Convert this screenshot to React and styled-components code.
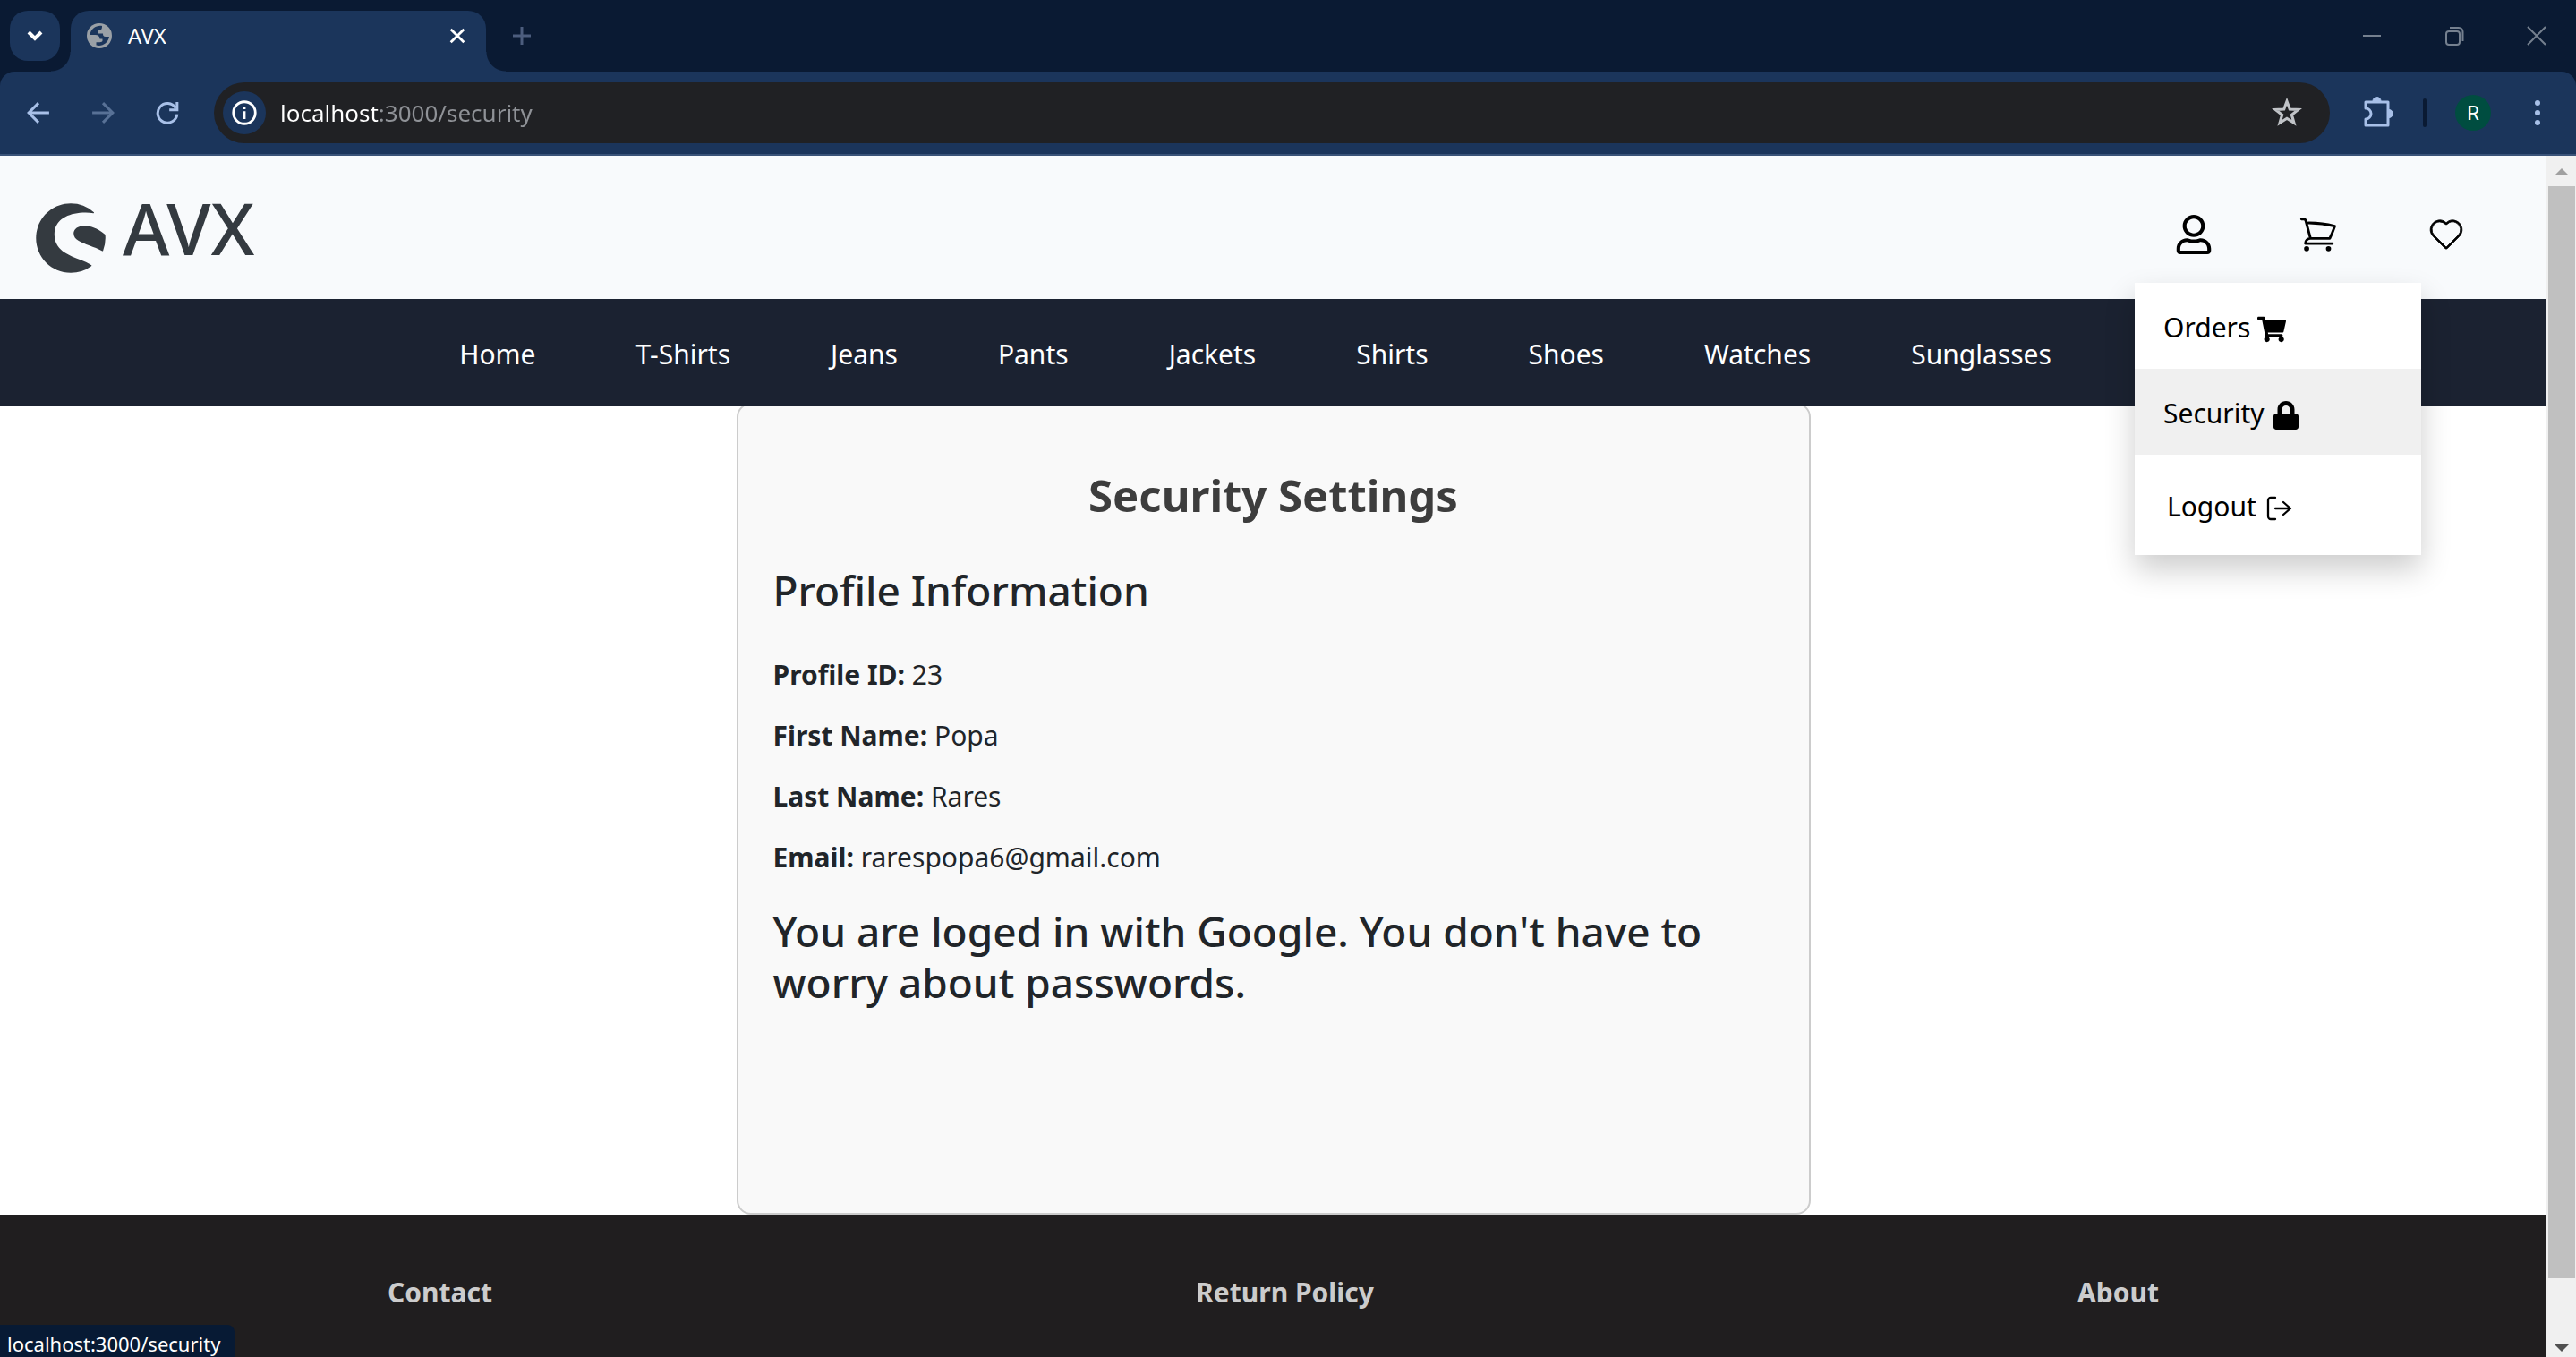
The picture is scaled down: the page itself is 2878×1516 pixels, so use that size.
import React from "react";
import styled, { createGlobalStyle } from "styled-components";
import { FaRegUser, FaShopware, FaShoppingCart, FaLock } from "react-icons/fa";
import { HiOutlineShoppingCart } from "react-icons/hi2";
import { CiHeart } from "react-icons/ci";

const color = {
  frame: "#0a1a33",
  toolbar: "#1b355b",
  toolbarLine: "#3a5379",
  toolbarIcon: "#a8c0e8",
  omnibox: "#202124",
  header: "#f8fafc",
  nav: "#1b2231",
  card: "#f9f9f9",
  border: "#cccccc",
  footer: "#201e1f",
  text: "#212529",
};

const GlobalStyle = createGlobalStyle`
  *, *::before, *::after { box-sizing: border-box; }
  body {
    margin: 0;
    overflow: hidden;
    font-family: "Noto Sans", "Open Sans", sans-serif;
    color: ${color.text};
    background: #ffffff;
  }
  h1, h2, p, ul { margin: 0; padding: 0; }
  button, input { font: inherit; color: inherit; }
  svg { display: block; flex: none; }
`;

const Window = styled.div`
  height: 100vh;
  display: flex;
  flex-direction: column;
`;

/* ---------- browser chrome ---------- */

const TabStrip = styled.div`
  height: 80px;
  padding: 12px 32px 0 11px;
  display: flex;
  background: ${color.frame};
`;

const IconButton = styled.button`
  width: 56px;
  height: 56px;
  padding: 0;
  border: 0;
  display: flex;
  flex: none;
  align-items: center;
  justify-content: center;
  border-radius: ${(p) => (p.$filled ? "20px" : "28px")};
  background: ${(p) => (p.$filled ? color.toolbar : "transparent")};
  color: ${(p) => p.$tint || color.toolbarIcon};
`;

const Tab = styled.div`
  position: relative;
  width: 464px;
  margin-left: 12px;
  padding: 0 12px 12px 18px;
  display: flex;
  align-items: center;
  border-radius: 20px 20px 0 0;
  background: ${color.toolbar};
  color: #ffffff;

  &::before,
  &::after {
    content: "";
    position: absolute;
    bottom: 0;
    width: 22px;
    height: 22px;
  }
  &::before {
    right: 100%;
    background: radial-gradient(circle at 0 0, transparent 21px, ${color.toolbar} 22px);
  }
  &::after {
    left: 100%;
    background: radial-gradient(circle at 100% 0, transparent 21px, ${color.toolbar} 22px);
  }
`;

const TabTitle = styled.span`
  flex: 1;
  margin-left: 18px;
  font-size: 24px;
  line-height: 32px;
`;

const TabClose = styled(IconButton)`
  width: 40px;
  height: 40px;
`;

const NewTab = styled(IconButton)`
  margin-left: 12px;
`;

const WindowButtons = styled.div`
  margin-left: auto;
  height: 56px;
  display: flex;
  gap: 68px;
  align-items: center;
`;

const WindowButton = styled.button`
  padding: 0;
  border: 0;
  background: none;
  color: #75808f;
`;

const ToolbarBack = styled.div`
  background: ${color.frame};
`;

const Toolbar = styled.div`
  height: 94px;
  padding: 0 15px;
  display: flex;
  align-items: center;
  border-bottom: 2px solid ${color.toolbarLine};
  border-radius: 16px 16px 0 0;
  background: ${color.toolbar};
`;

const NavButtons = styled.div`
  display: flex;
  gap: 16px;
  margin-right: 24px;
`;

const Omnibox = styled.form`
  flex: 1;
  height: 68px;
  padding: 0 20px 0 10px;
  display: flex;
  align-items: center;
  border-radius: 34px;
  background: ${color.omnibox};
`;

const SiteInfo = styled(IconButton)`
  width: 48px;
  height: 48px;
  background: ${color.toolbar};
`;

/* The host part of the address is bright and the rest is dimmed. */
const Address = styled.input`
  flex: 1;
  min-width: 0;
  height: 48px;
  margin-left: 16px;
  padding: 0;
  border: 0;
  outline: 0;
  font-size: 26px;
  color: #ffffff;
  background: linear-gradient(90deg, #ffffff 110px, #8f9297 110px);
  background-clip: text;
  -webkit-background-clip: text;
  -webkit-text-fill-color: transparent;
`;

const ToolbarEnd = styled.div`
  display: flex;
  align-items: center;
  margin-left: 26px;
`;

const Divider = styled.span`
  width: 4px;
  height: 32px;
  margin: 0 24px 0 22px;
  border-radius: 2px;
  background: ${color.frame};
`;

const Avatar = styled.span`
  width: 40px;
  height: 40px;
  border-radius: 50%;
  display: flex;
  align-items: center;
  justify-content: center;
  font-family: Roboto, sans-serif;
  font-size: 22px;
  color: #ffffff;
  background: #004d40;
`;

const MenuButton = styled(IconButton)`
  margin-left: 16px;
`;

const StatusBubble = styled.div`
  position: fixed;
  left: 0;
  bottom: 0;
  padding: 6px 16px 0 8px;
  border-radius: 0 8px 0 0;
  font-size: 22px;
  line-height: 30px;
  color: #ffffff;
  background: #071a34;
`;

/* ---------- page ---------- */

const Viewport = styled.div`
  flex: 1;
  min-height: 0;
  display: flex;
`;

const Page = styled.div`
  flex: 1;
  min-width: 0;
  overflow: hidden;
  display: flex;
  flex-direction: column;
`;

const Header = styled.header`
  height: 160px;
  flex: none;
  padding: 0 88px 0 39px;
  display: flex;
  align-items: center;
  justify-content: space-between;
  background: ${color.header};
`;

const Brand = styled.a`
  display: flex;
  align-items: center;
  gap: 18px;
  font-size: 80px;
  line-height: 96px;
  font-weight: 500;
  color: #343a40;
  text-decoration: none;

  svg { margin-top: 24px; }
`;

const HeaderActions = styled.div`
  display: flex;
  align-items: center;
  gap: 96px;
  margin-top: 16px;
`;

const ActionButton = styled.button`
  display: block;
  padding: 0;
  border: 0;
  background: none;
  color: #000000;
`;

const AccountMenu = styled.div`
  position: relative;
  margin-right: -2px;
`;

const Dropdown = styled.div`
  position: absolute;
  z-index: 2;
  top: 76px;
  left: -44px;
  width: 320px;
  background: #ffffff;
  box-shadow: 0 16px 32px rgba(0, 0, 0, 0.2);
`;

const DropdownLink = styled.a`
  height: 96px;
  padding: 4px 32px 0;
  display: flex;
  align-items: center;
  gap: 8px;
  font-size: 30px;
  line-height: 48px;
  color: #000000;
  text-decoration: none;
  background: ${(p) => (p.$active ? "#f0f0f0" : "transparent")};

  svg { margin-top: 4px; }
`;

const LogoutButton = styled(DropdownLink)`
  width: 100%;
  height: 112px;
  padding: 4px 36px 0;
  border: 0;
  background: none;
`;

const Nav = styled.nav`
  position: relative;
  z-index: 1;
  height: 120px;
  flex: none;
  padding: 4px 40px 0 0;
  display: flex;
  align-items: center;
  justify-content: center;
  gap: 112px;
  background: ${color.nav};
`;

const NavLink = styled.a`
  font-size: 30px;
  line-height: 48px;
  color: #ffffff;
  text-decoration: none;
`;

const Card = styled.main`
  width: 1200px;
  max-width: 100%;
  flex: none;
  margin: -4px auto 0;
  padding: 72px 39px 229px;
  border: 2px solid ${color.border};
  border-radius: 16px;
  background: ${color.card};
`;

const Title = styled.h1`
  font-size: 49px;
  line-height: 58px;
  font-weight: 700;
  text-align: center;
  color: #3d3d3d;
`;

const Heading = styled.h2`
  font-size: 46px;
  line-height: 57px;
  font-weight: 500;
`;

const ProfileHeading = styled(Heading)`
  margin: 49px 0 42px;
`;

const Fields = styled.div`
  display: flex;
  flex-direction: column;
  gap: 20px;
  margin-bottom: 30px;
`;

const Field = styled.p`
  font-size: 30px;
  line-height: 48px;
`;

const Footer = styled.footer`
  flex: 1;
  padding: 63px 40px 0;
  display: flex;
  align-items: flex-start;
  justify-content: space-around;
  background: ${color.footer};
`;

const FooterTitle = styled.a`
  font-size: 30px;
  line-height: 48px;
  font-weight: 700;
  color: ${color.border};
  text-decoration: none;
`;

const Scrollbar = styled.div`
  width: 33px;
  flex: none;
  padding: 14px 1px 6px 2px;
  display: flex;
  flex-direction: column;
  align-items: center;
  background: #f0f0f0;
`;

const Arrow = styled.span`
  border: 8px solid transparent;
  ${(p) => (p.$up ? "border-top: 0; border-bottom-color: #a0a0a0;" : "border-bottom: 0; border-top-color: #505050;")}
`;

const Track = styled.div`
  flex: 1;
  align-self: stretch;
  margin: 12px 0 10px;
`;

const Thumb = styled.div`
  height: 95%;
  background: #c0c0c0;
`;

/* ---------- drawings ---------- */

const Line = ({ d, w = 24, s = 3, children }) => (
  <svg width={w} height={w} viewBox="0 0 24 24" fill="none" stroke="currentColor" strokeWidth={s}>
    {d && <path d={d} />}
    {children}
  </svg>
);

const Globe = () => (
  <svg width="28" height="28" viewBox="0 0 28 28">
    <circle cx="14" cy="14" r="14" fill="#9aa0a6" />
    <path
      d="M17 3C11 2 4 6 3.500 13H9.500C12.500 13 14.500 14.500 14.500 17.500H17.500V19.500C17.500 20.800 16 21.200 14.500 21.200H10.500V24.500C17 26.500 24 22 25 15H21C18.500 15 18 13.500 18 11.500H12.500V9C12.500 7.500 14 8 15.500 7.500C16.800 7 17 5 17 3Z"
      fill={color.toolbar}
    />
  </svg>
);

const Exit = () => (
  <svg width="32" height="32" viewBox="0 0 32 32" fill="none" stroke="currentColor" strokeWidth="2.3" strokeLinecap="round" strokeLinejoin="round">
    <path d="M13 4H8a3 3 0 0 0-3 3v18a3 3 0 0 0 3 3h5" />
    <path d="M13 16h17M22 9l8 7-8 7" />
  </svg>
);

const Puzzle = () => (
  <svg width="36" height="36" viewBox="0 0 36 36" fill="none" stroke="currentColor" strokeWidth="3" strokeLinejoin="round">
    <path d="M4 6H29V32H4V25A6 6 0 0 0 4 13Z" />
    <path d="M12 5A4.500 4.500 0 0 1 21 5ZM30 14.500A4.500 4.500 0 0 1 30 23.500Z" fill="currentColor" strokeWidth="1" />
  </svg>
);

const navItems = ["Home", "T-Shirts", "Jeans", "Pants", "Jackets", "Shirts", "Shoes", "Watches", "Sunglasses"];

const profile = [
  ["Profile ID", "23"],
  ["First Name", "Popa"],
  ["Last Name", "Rares"],
  ["Email", "rarespopa6@gmail.com"],
];

const footerItems = ["Contact", "Return Policy", "About"];

function BrowserBar() {
  return (
    <>
      <TabStrip>
        <IconButton $filled $tint="#ffffff" aria-label="Search tabs">
          <Line d="M5 8l7 7 7-7" w={24} s={4} />
        </IconButton>
        <Tab>
          <Globe />
          <TabTitle>AVX</TabTitle>
          <TabClose $tint="#ffffff" aria-label="Close tab">
            <Line d="M4 4L20 20M20 4L4 20" w={22} s={3} />
          </TabClose>
        </Tab>
        <NewTab $tint="#4c5d7e" aria-label="New tab">
          <Line d="M12 2V22M2 12H22" w={24} s={3} />
        </NewTab>
        <WindowButtons>
          <WindowButton aria-label="Minimize">
            <Line d="M2 12H22" s={2} />
          </WindowButton>
          <WindowButton aria-label="Restore">
            <Line s={2}>
              <rect x="3" y="7" width="15" height="15" rx="3" />
              <path d="M7 3H17A4.500 4.500 0 0 1 21.500 7.500V18" />
            </Line>
          </WindowButton>
          <WindowButton aria-label="Close window">
            <Line d="M2 2L22 22M22 2L2 22" s={2} />
          </WindowButton>
        </WindowButtons>
      </TabStrip>
      <ToolbarBack>
        <Toolbar>
          <NavButtons>
            <IconButton aria-label="Back">
              <Line d="M23 12H3M12 2L2 12L12 22" w={26} s={2.8} />
            </IconButton>
            <IconButton $tint="#587196" aria-label="Forward">
              <Line d="M1 12H21M12 2L22 12L12 22" w={26} s={2.8} />
            </IconButton>
            <IconButton aria-label="Reload">
              <Line d="M20.500 7A10 10 0 1 0 22 13.500M22 1V9H14" w={26} s={2.8} />
            </IconButton>
          </NavButtons>
          <Omnibox>
            <SiteInfo type="button" $tint="#ffffff" aria-label="Site information">
              <Line w={28} s={2.4}>
                <circle cx="12" cy="12" r="10.500" />
                <path d="M12 10.500V18M12 6V8.500" />
              </Line>
            </SiteInfo>
            <Address aria-label="Address" defaultValue="localhost:3000/security" />
            <IconButton type="button" $tint="#c0c3c7" aria-label="Bookmark">
              <Line w={34} s={2.2} d="M12 3L14.300 9.200L21 9.500L15.800 13.600L17.600 20L12 16.400L6.400 20L8.200 13.600L3 9.500L9.700 9.200Z" />
            </IconButton>
          </Omnibox>
          <ToolbarEnd>
            <IconButton aria-label="Extensions">
              <Puzzle />
            </IconButton>
            <Divider />
            <IconButton aria-label="Profile">
              <Avatar>R</Avatar>
            </IconButton>
            <MenuButton aria-label="Browser menu">
              <svg width="8" height="32" viewBox="0 0 8 32" fill="currentColor">
                <circle cx="4" cy="5" r="3" />
                <circle cx="4" cy="16" r="3" />
                <circle cx="4" cy="27" r="3" />
              </svg>
            </MenuButton>
          </ToolbarEnd>
        </Toolbar>
      </ToolbarBack>
    </>
  );
}

function ShopHeader() {
  return (
    <Header>
      <Brand href="#home">
        <FaShopware size={80} />
        AVX
      </Brand>
      <HeaderActions>
        <AccountMenu>
          <ActionButton aria-label="Account">
            <FaRegUser size={44} />
          </ActionButton>
          <Dropdown>
            <DropdownLink href="#orders">
              Orders <FaShoppingCart size={32} />
            </DropdownLink>
            <DropdownLink href="#security" $active>
              Security <FaLock size={32} />
            </DropdownLink>
            <LogoutButton as="button">
              Logout <Exit />
            </LogoutButton>
          </Dropdown>
        </AccountMenu>
        <ActionButton aria-label="Cart">
          <HiOutlineShoppingCart size={46} />
        </ActionButton>
        <ActionButton aria-label="Favourites">
          <CiHeart size={48} stroke="#000000" strokeWidth="0.4" />
        </ActionButton>
      </HeaderActions>
    </Header>
  );
}

export default function App() {
  return (
    <Window>
      <GlobalStyle />
      <BrowserBar />
      <Viewport>
        <Page>
          <ShopHeader />
          <Nav>
            {navItems.map((item) => (
              <NavLink key={item} href={`#${item.toLowerCase()}`}>
                {item}
              </NavLink>
            ))}
          </Nav>
          <Card>
            <Title>Security Settings</Title>
            <ProfileHeading>Profile Information</ProfileHeading>
            <Fields>
              {profile.map(([label, value]) => (
                <Field key={label}>
                  <strong>{label}:</strong> {value}
                </Field>
              ))}
            </Fields>
            <Heading>You are loged in with Google. You don't have to worry about passwords.</Heading>
          </Card>
          <Footer>
            {footerItems.map((item) => (
              <FooterTitle key={item} href={`#${item.toLowerCase()}`}>
                {item}
              </FooterTitle>
            ))}
          </Footer>
        </Page>
        <Scrollbar aria-hidden="true">
          <Arrow $up />
          <Track>
            <Thumb />
          </Track>
          <Arrow />
        </Scrollbar>
      </Viewport>
      <StatusBubble>localhost:3000/security</StatusBubble>
    </Window>
  );
}
